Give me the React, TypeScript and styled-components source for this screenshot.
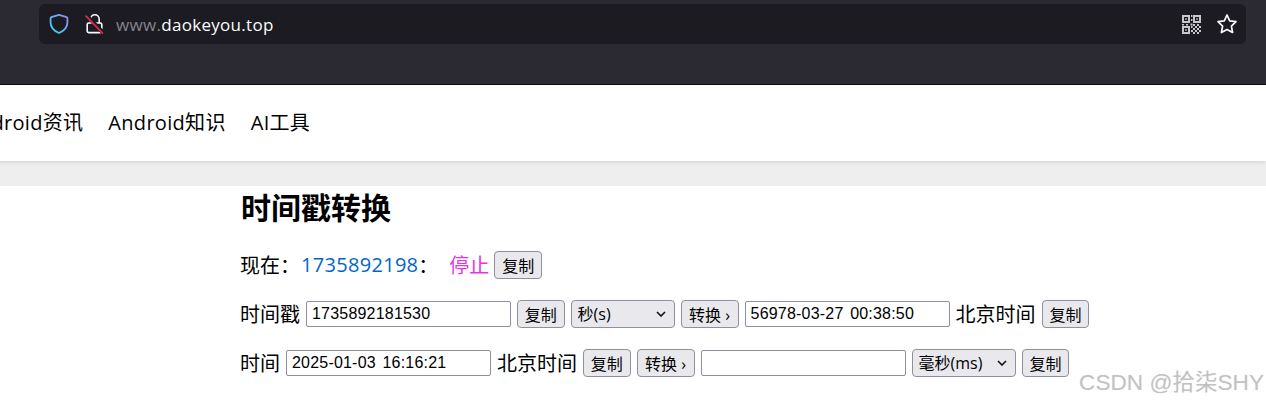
import styled, { createGlobalStyle } from "styled-components"

const cjk = `"Noto Sans CJK SC", sans-serif`
const uiFont = `"Open Sans", ${cjk}`

const chevron = `url("data:image/svg+xml,%3Csvg xmlns='http://www.w3.org/2000/svg' width='10' height='6' viewBox='0 0 10 6'%3E%3Cpath d='M1 1l4 4 4-4' fill='none' stroke='%23111' stroke-width='1.6'/%3E%3C/svg%3E")`

const GlobalStyle = createGlobalStyle`
    html, body {
        margin: 0;
        padding: 0;
        background: #fff;
        overflow: hidden;
    }
`

function ShieldIcon() {
    return (
        <svg width="20" height="22" viewBox="0 0 20 22" fill="none">
            <defs>
                <linearGradient id="shieldGrad" x1="1" y1="20" x2="19" y2="2" gradientUnits="userSpaceOnUse">
                    <stop offset="0" stopColor="#35d9f5" />
                    <stop offset="1" stopColor="#9a86f5" />
                </linearGradient>
            </defs>
            <path
                d="M10 1.8 L17.6 4.2 C18.2 4.4 18.4 4.8 18.4 5.3 L18.4 9.5 C18.4 14.2 15 17.9 10 20 C5 17.9 1.6 14.2 1.6 9.5 L1.6 5.3 C1.6 4.8 1.8 4.4 2.4 4.2 Z"
                stroke="url(#shieldGrad)"
                strokeWidth="1.8"
                strokeLinejoin="round"
            />
        </svg>
    )
}

function LockIcon() {
    return (
        <svg width="20" height="22" viewBox="0 0 20 22" fill="none">
            <path
                d="M5.5 10 L5.5 6.2 C5.5 3.6 7.4 1.8 9.8 1.8 C12.2 1.8 14.2 3.6 14.2 6.2 L14.2 10"
                stroke="#fbfbfe"
                strokeWidth="1.6"
            />
            <rect x="2.2" y="10" width="14.6" height="9.6" rx="1.6" stroke="#fbfbfe" strokeWidth="1.6" />
            <path d="M1 2 L18.5 20" stroke="#1c1b22" strokeWidth="4" />
            <path d="M0.6 2.6 L18 20.6" stroke="#e22850" strokeWidth="1.7" />
        </svg>
    )
}

function QrIcon() {
    return (
        <svg width="19" height="19" viewBox="0 0 19 19" fill="#c8c8cc">
            <path fillRule="evenodd" d="M0 0h8v8H0z M2 2v4h4V2z" />
            <path fillRule="evenodd" d="M11 0h8v8h-8z M13 2v4h4V2z" />
            <path fillRule="evenodd" d="M0 11h8v8H0z M2 13v4h4v-4z" />
            <path d="M3.2 3.2h1.6v1.6H3.2z M14.2 3.2h1.6v1.6h-1.6z M3.2 14.2h1.6v1.6H3.2z" />
            <path d="M9 0h1.4v2H9z M9 4h1.4v2H9z M0 9h2v1.4H0z M4 9h2v1.4H4z M8.5 8.5h2v2h-2z" />
            <path d="M11 9h2v2h-2z M15 9h2v2h-2z M13 11h2v2h-2z M17 11h2v2h-2z M11 13h2v2h-2z M15 13h2v2h-2z M9 15h2v2H9z M13 15h2v2h-2z M17 15h2v2h-2z M11 17h2v2h-2z M15 17h2v2h-2z M9 11h1.6v2H9z" />
        </svg>
    )
}

function StarIcon() {
    return (
        <svg width="22" height="22" viewBox="0 0 22 22" fill="none">
            <path
                d="M11 2 L13.7 7.9 L20 8.7 L15.4 13.1 L16.6 19.5 L11 16.4 L5.4 19.5 L6.6 13.1 L2 8.7 L8.3 7.9 Z"
                stroke="#fbfbfe"
                strokeWidth="1.7"
                strokeLinejoin="round"
            />
        </svg>
    )
}

function App() {
    return (
        <Page>
            <GlobalStyle />
            <BrowserBar>
                <UrlBar>
                    <ShieldSlot>
                        <ShieldIcon />
                    </ShieldSlot>
                    <LockSlot>
                        <LockIcon />
                    </LockSlot>
                    <Url>
                        <UrlPrefix>www.</UrlPrefix>daokeyou.top
                    </Url>
                    <UrlActions>
                        <QrIcon />
                        <StarIcon />
                    </UrlActions>
                </UrlBar>
            </BrowserBar>

            <Nav>
                <NavItem>Android资讯</NavItem>
                <NavItem>Android知识</NavItem>
                <NavItem>AI工具</NavItem>
            </Nav>
            <Band />

            <Content>
                <Title>时间戳转换</Title>

                <NowRow>
                    <Label>现在：</Label>
                    <Stamp>1735892198</Stamp>
                    <Sep>：</Sep>
                    <Stop>停止</Stop>
                    <Button>复制</Button>
                </NowRow>

                <Row>
                    <Label>时间戳</Label>
                    <TextInput defaultValue="1735892181530" />
                    <Button>复制</Button>
                    <Select defaultValue="s">
                        <option value="s">秒(s)</option>
                        <option value="ms">毫秒(ms)</option>
                    </Select>
                    <ConvertButton>转换 ›</ConvertButton>
                    <TextInput defaultValue="56978-03-27 00:38:50" />
                    <Label>北京时间</Label>
                    <Button>复制</Button>
                </Row>

                <Row>
                    <Label>时间</Label>
                    <TextInput defaultValue="2025-01-03 16:16:21" />
                    <Label>北京时间</Label>
                    <Button>复制</Button>
                    <ConvertButton>转换 ›</ConvertButton>
                    <TextInput defaultValue="" />
                    <Select defaultValue="ms">
                        <option value="s">秒(s)</option>
                        <option value="ms">毫秒(ms)</option>
                    </Select>
                    <Button>复制</Button>
                </Row>
            </Content>

            <Watermark>CSDN @拾柒SHY</Watermark>
        </Page>
    )
}

export default App

const Page = styled.div`
    position: relative;
    width: 1266px;
    height: 404px;
    overflow: hidden;
    display: flex;
    flex-direction: column;
    background: #fff;
    color: #000;
    font-family: ${uiFont};
`

const BrowserBar = styled.div`
    flex: none;
    height: 85px;
    padding: 4px 20px 0 39px;
    box-sizing: border-box;
    background: #2b2a33;
    border-bottom: 1px solid #0c0c0d;
`

const UrlBar = styled.div`
    height: 40px;
    display: flex;
    align-items: center;
    background: #1c1b22;
    border-radius: 6px;
    color: #fbfbfe;
`

const ShieldSlot = styled.div`
    display: flex;
    margin-left: 10px;
`

const LockSlot = styled.div`
    display: flex;
    margin-left: 16px;
`

const Url = styled.div`
    margin-left: 11px;
    font-family: "Open Sans", sans-serif;
    font-size: 17px;
    letter-spacing: 0.3px;
    color: #fbfbfe;
`

const UrlPrefix = styled.span`
    color: #85848c;
`

const UrlActions = styled.div`
    margin-left: auto;
    margin-right: 8px;
    display: flex;
    align-items: center;
    gap: 15px;
`

const Nav = styled.nav`
    flex: none;
    height: 76px;
    margin-left: -34px;
    padding-bottom: 4px;
    box-sizing: border-box;
    display: flex;
    align-items: center;
    gap: 25px;
    background: #fff;
    box-shadow: 0 1px 4px rgba(0, 0, 0, 0.12);
    position: relative;
`

const NavItem = styled.a`
    font-size: 20px;
    letter-spacing: 0.3px;
    color: #000;
`

const Band = styled.div`
    flex: none;
    height: 25px;
    background: #eeeeee;
`

const Content = styled.main`
    padding-left: 240px;
    display: flex;
    flex-direction: column;
    font-size: 20px;
`

const Title = styled.h1`
    margin: 2px 0 0 1px;
    font-size: 30px;
    line-height: 40px;
    font-weight: 700;
`

const NowRow = styled.div`
    margin-top: 22px;
    height: 30px;
    display: flex;
    align-items: center;
    white-space: pre;
`

const Label = styled.span`
    margin-bottom: 2px;
`

const Stamp = styled.span`
    color: #0066cc;
    letter-spacing: 0.3px;
    margin: 0 0 2px 1px;
`

const Sep = styled.span`
    margin: 0 11px 2px 0;
`

const Stop = styled.span`
    color: #e633e6;
    margin: 0 5px 2px 0;
`

const Row = styled.div`
    margin-top: 19px;
    height: 30px;
    display: flex;
    align-items: center;
    gap: 6px;
    white-space: nowrap;
`

const Button = styled.button`
    height: 28px;
    padding: 0 6.8px;
    box-sizing: border-box;
    font-family: ${uiFont};
    font-size: 16px;
    color: #000;
    background: #e9e9ed;
    border: 1px solid #8f8f9d;
    border-radius: 4px;
    white-space: nowrap;
`

const ConvertButton = styled(Button)`
    padding: 0 7.5px;
`

const TextInput = styled.input`
    width: 205px;
    height: 26px;
    padding: 0 4px 0 5px;
    box-sizing: border-box;
    font-family: "Liberation Sans", ${cjk};
    font-size: 16px;
    letter-spacing: 0.2px;
    word-spacing: 2px;
    color: #000;
    background: #fff;
    border: 1px solid #8f8f9d;
    border-radius: 2px;
    outline: none;
`

const Select = styled.select`
    appearance: none;
    width: 104px;
    height: 28px;
    padding: 0 16px 0 6px;
    box-sizing: border-box;
    font-family: ${uiFont};
    font-size: 16px;
    color: #000;
    background: #e9e9ed ${chevron} no-repeat right 8px center;
    border: 1px solid #8f8f9d;
    border-radius: 4px;
`

const Watermark = styled.div`
    position: absolute;
    right: 2px;
    bottom: 7px;
    font-family: "Liberation Sans", ${cjk};
    font-size: 22.6px;
    color: rgba(160, 160, 160, 0.55);
    text-shadow: 0 0 1px rgba(170, 170, 170, 0.3);
`
